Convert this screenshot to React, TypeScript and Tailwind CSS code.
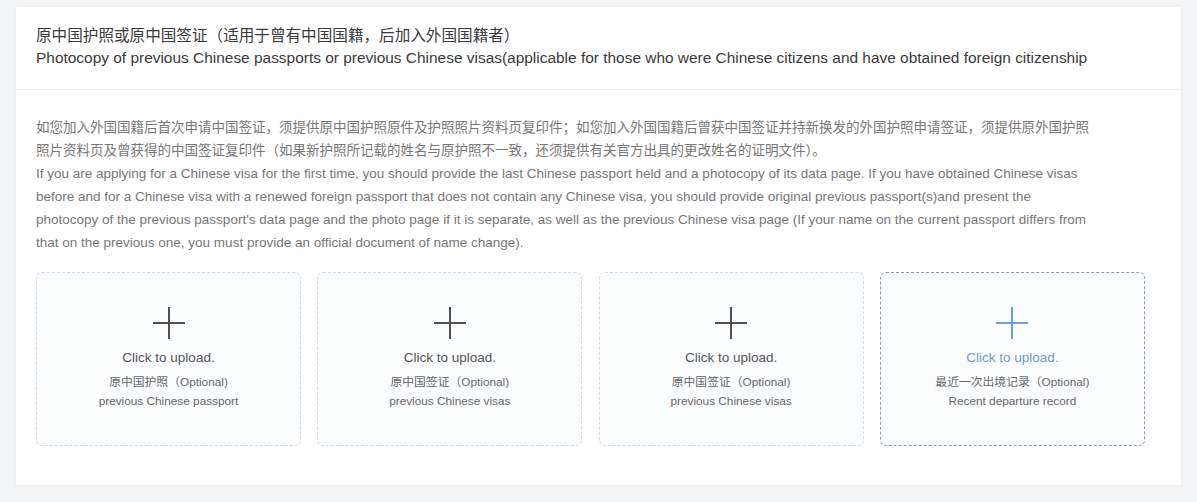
import React from "react";

const font = { fontFamily: '"Liberation Sans", Arial, "Noto Sans CJK SC", sans-serif' };

function Plus({ color }: { color: string }) {
  return (
    <svg width="34" height="34" viewBox="0 0 34 34" fill="none">
      <path d="M17 1v32M1 17h32" stroke={color} strokeWidth="2" />
    </svg>
  );
}

function UploadBox({ zh, en, active }: { zh: string; en: string; active?: boolean }) {
  return (
    <div
      className={
        "h-[174px] w-[265px] shrink-0 rounded-[6px] border border-dashed bg-[#fbfcfe] flex flex-col items-center pt-[33px] cursor-pointer " +
        (active ? "border-[#8f9aa8]" : "border-[#d6d9de]")
      }
    >
      <Plus color={active ? "#6aa0d5" : "#4f4f4f"} />
      <div className={"mt-[9px] text-[13.5px] leading-[18px] " + (active ? "text-[#6a9dd2]" : "text-[#555]")}>
        Click to upload.
      </div>
      <div className="mt-[6px] text-[11.8px] leading-[19px] text-[#666] text-center">
        <div>{zh}</div>
        <div>{en}</div>
      </div>
    </div>
  );
}

export default function App() {
  return (
    <div className="w-[1197px] h-[502px] bg-[#f4f5f7] pt-[7px] pl-[16px]" style={font}>
      <div className="w-[1165px] h-[478px] bg-white shadow-[0_0_6px_rgba(0,0,0,0.06)]">
        <div className="pt-[18px] pb-[20px] px-[20px] border-b border-[#eeeff1] leading-[22px] text-[#3a3a3a]">
          <div className="text-[15.6px]">原中国护照或原中国签证（适用于曾有中国国籍，后加入外国国籍者）</div>
          <div className="whitespace-nowrap text-[15.45px]">
            Photocopy of previous Chinese passports or previous Chinese visas(applicable for those who were Chinese citizens and have obtained foreign citizenship
          </div>
        </div>
        <div className="px-[20px] pt-[26px]">
          <div className="text-[13.5px] leading-[23px] text-[#777] whitespace-nowrap">
            <div>如您加入外国国籍后首次申请中国签证，须提供原中国护照原件及护照照片资料页复印件；如您加入外国国籍后曾获中国签证并持新换发的外国护照申请签证，须提供原外国护照</div>
            <div>照片资料页及曾获得的中国签证复印件（如果新护照所记载的姓名与原护照不一致，还须提供有关官方出具的更改姓名的证明文件）。</div>
            <div>If you are applying for a Chinese visa for the first time, you should provide the last Chinese passport held and a photocopy of its data page. If you have obtained Chinese visas</div>
            <div>before and for a Chinese visa with a renewed foreign passport that does not contain any Chinese visa, you should provide original previous passport(s)and present the</div>
            <div>photocopy of the previous passport's data page and the photo page if it is separate, as well as the previous Chinese visa page (If your name on the current passport differs from</div>
            <div>that on the previous one, you must provide an official document of name change).</div>
          </div>
          <div className="mt-[18px] flex gap-[16.3px]">
            <UploadBox zh="原中国护照（Optional)" en="previous Chinese passport" />
            <UploadBox zh="原中国签证（Optional)" en="previous Chinese visas" />
            <UploadBox zh="原中国签证（Optional)" en="previous Chinese visas" />
            <UploadBox zh="最近一次出境记录（Optional)" en="Recent departure record" active />
          </div>
        </div>
      </div>
    </div>
  );
}
